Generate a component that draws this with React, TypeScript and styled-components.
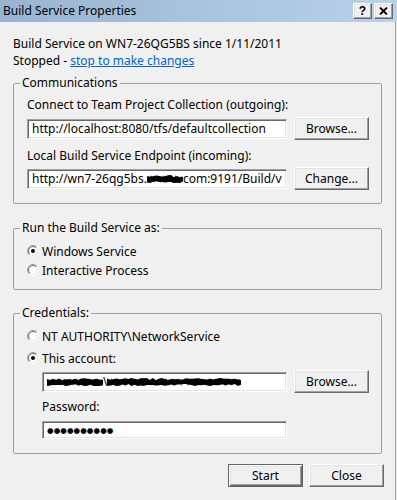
import React from 'react';
import styled, { createGlobalStyle } from 'styled-components';

const GlobalStyle = createGlobalStyle`
  html, body {
    margin: 0;
    padding: 0;
    background: #f0f0f0;
  }
  body {
    font-family: "Noto Sans", "Open Sans", sans-serif;
    font-size: 12px;
    color: #000;
  }
`;

const Window = styled.div`
  width: 397px;
  height: 500px;
  display: flex;
  flex-direction: column;
  background: #f0f0f0;
  overflow: hidden;
`;

const TitleBar = styled.div`
  flex: none;
  height: 22px;
  display: flex;
  align-items: center;
  justify-content: space-between;
  padding: 0 4px 0 3px;
  background: linear-gradient(90deg, #99b4d1 0%, #b9d1ea 100%);
`;

const Caption = styled.span`
  line-height: 16px;
`;

const CaptionButtons = styled.div`
  display: flex;
  gap: 2px;
`;

const CaptionButton = styled.div`
  width: 19px;
  height: 16px;
  box-sizing: border-box;
  display: flex;
  align-items: center;
  justify-content: center;
  background: #f0f0f0;
  border: 1px solid;
  border-color: #fff #696969 #696969 #fff;
  box-shadow: inset -1px -1px #a0a0a0, inset 1px 1px #e3e3e3;
  font-family: "Liberation Sans", sans-serif;
  font-weight: bold;
  font-size: 12px;
  line-height: 12px;
`;

const Body = styled.div`
  flex: 1;
  width: 396px;
  box-sizing: border-box;
  padding: 13px 13px 0 13px;
  border-right: 1px solid #a0a0a0;
`;

const InfoLine = styled.div`
  line-height: 17px;
  white-space: nowrap;
`;

const Link = styled.a`
  color: #0066cc;
  text-decoration: underline;
  cursor: pointer;
`;

const Group = styled.fieldset<{ $top: number; $bottom: number }>`
  margin: ${p => p.$top}px 0 0 0;
  padding: 6px 11px ${p => p.$bottom}px 13px;
  border: 1px solid #a0a0a0;
  border-radius: 2px;
  min-width: 0;
`;

const Legend = styled.legend`
  padding: 0 2px;
  margin-left: -7px;
  line-height: 16px;
`;

const FieldLabel = styled.div<{ $mt?: number; $indent?: number }>`
  margin-top: ${p => p.$mt ?? 0}px;
  margin-left: ${p => p.$indent ?? 0}px;
  line-height: 16px;
  white-space: nowrap;
`;

const InputRow = styled.div<{ $mt?: number; $indent?: number }>`
  display: flex;
  align-items: center;
  height: 23px;
  margin-top: ${p => p.$mt ?? 0}px;
  margin-left: ${p => p.$indent ?? 0}px;
`;

const TextBox = styled.div<{ $w: number; $h?: number; $mt?: number; $indent?: number }>`
  width: ${p => p.$w}px;
  height: ${p => p.$h ?? 20}px;
  margin-top: ${p => p.$mt ?? 0}px;
  margin-left: ${p => p.$indent ?? 0}px;
  box-sizing: border-box;
  display: flex;
  align-items: center;
  padding-left: 4px;
  background: #fff;
  border: 1px solid;
  border-color: #a0a0a0 #fff #fff #a0a0a0;
  box-shadow: inset 1px 1px #696969, inset -1px -1px #e3e3e3;
  white-space: nowrap;
  overflow: hidden;
`;

const Button = styled.button<{ $default?: boolean }>`
  width: 75px;
  height: 23px;
  margin-left: 7px;
  padding: 0;
  box-sizing: border-box;
  background: #f0f0f0;
  font: inherit;
  color: #000;
  border: 1px solid;
  border-color: ${p => (p.$default ? '#646464' : '#fff #696969 #696969 #fff')};
  box-shadow: ${p =>
    p.$default
      ? 'inset 1px 1px #fff, inset -1px -1px #696969, inset 2px 2px #e3e3e3, inset -2px -2px #a0a0a0'
      : 'inset -1px -1px #a0a0a0, inset 1px 1px #e3e3e3'};
`;

const RadioRow = styled.label<{ $mt?: number }>`
  display: flex;
  align-items: center;
  gap: 3px;
  height: 18px;
  margin-top: ${p => p.$mt ?? 0}px;
  white-space: nowrap;
`;

const Redacted = styled.span<{ $w: number }>`
  display: inline-flex;
  width: ${p => p.$w}px;
  height: 10px;
`;

const Dots = styled.span`
  font-family: "DejaVu Sans", sans-serif;
  font-size: 7.5px;
  letter-spacing: 0.1px;
`;

const ButtonRow = styled.div`
  display: flex;
  justify-content: flex-end;
  gap: 6px;
  margin: 10px -2px 0 0;

  & > button {
    margin-left: 0;
  }
`;

const Radio: React.FC<{ checked?: boolean; id: string }> = ({ checked, id }) => (
  <svg width="12" height="12" viewBox="0 0 12 12">
    <defs>
      <linearGradient id={`${id}o`} x1="0" y1="0" x2="1" y2="1">
        <stop offset="0.5" stopColor="#a0a0a0" />
        <stop offset="0.5" stopColor="#ffffff" />
      </linearGradient>
      <linearGradient id={`${id}i`} x1="0" y1="0" x2="1" y2="1">
        <stop offset="0.5" stopColor="#696969" />
        <stop offset="0.5" stopColor="#e3e3e3" />
      </linearGradient>
    </defs>
    <circle cx="6" cy="6" r="5.5" fill="none" stroke={`url(#${id}o)`} strokeWidth="1" />
    <circle cx="6" cy="6" r="4.5" fill="#fff" stroke={`url(#${id}i)`} strokeWidth="1" />
    {checked && <circle cx="6" cy="6" r="2" fill="#000" />}
  </svg>
);

// irregular black marker blob used to hide private parts of the fields
const Scribble: React.FC<{ w: number; seed?: number }> = ({ w, seed = 1 }) => {
  const n = Math.max(3, Math.floor(w / 3));
  const jitter = (i: number) => ((Math.sin((i + 1) * 12.9898 * seed) * 43758.5453) % 1 + 1) % 1;
  const top = Array.from({ length: n + 1 }, (_, i) => `L${((i * w) / n).toFixed(1)} ${(1 + jitter(i) * 2.2).toFixed(1)}`);
  const bottom = Array.from({ length: n + 1 }, (_, i) => {
    const k = n - i;
    return `L${((k * w) / n).toFixed(1)} ${(7 + jitter(k + 50) * 2.2).toFixed(1)}`;
  });
  return (
    <svg width={w} height="10" viewBox={`0 0 ${w} 10`}>
      <path d={`M0 5 ${top.join(' ')} ${bottom.join(' ')} Z`} fill="#000" />
      <path
        d={`M1 5 ${Array.from({ length: n }, (_, i) => `L${(((i + 0.5) * w) / n).toFixed(1)} ${i % 2 ? 2.5 : 7.5}`).join(' ')}`}
        fill="none"
        stroke="#000"
        strokeWidth="1.2"
        opacity="0.6"
      />
    </svg>
  );
};

export default function App() {
  return (
    <>
      <GlobalStyle />
      <Window>
        <TitleBar>
          <Caption>Build Service Properties</Caption>
          <CaptionButtons>
            <CaptionButton>?</CaptionButton>
            <CaptionButton>
              <svg width="9" height="8" viewBox="0 0 9 8">
                <path d="M1 0.5 L8 7.5 M8 0.5 L1 7.5" stroke="#000" strokeWidth="1.8" />
              </svg>
            </CaptionButton>
          </CaptionButtons>
        </TitleBar>
        <Body>
          <InfoLine>Build Service on WN7-26QG5BS since 1/11/2011</InfoLine>
          <InfoLine>
            Stopped - <Link>stop to make changes</Link>
          </InfoLine>

          <Group $top={6} $bottom={13}>
            <Legend>Communications</Legend>
            <FieldLabel>Connect to Team Project Collection (outgoing):</FieldLabel>
            <InputRow $mt={4}>
              <TextBox $w={260}>http://localhost:8080/tfs/defaultcollection</TextBox>
              <Button>Browse...</Button>
            </InputRow>
            <FieldLabel $mt={8}>Local Build Service Endpoint (incoming):</FieldLabel>
            <InputRow $mt={3}>
              <TextBox $w={260}>
                http://wn7-26qg5bs.
                <Redacted $w={36}>
                  <Scribble w={36} seed={3} />
                </Redacted>
                com:9191/Build/v
              </TextBox>
              <Button>Change...</Button>
            </InputRow>
          </Group>

          <Group $top={16} $bottom={10}>
            <Legend>Run the Build Service as:</Legend>
            <RadioRow>
              <Radio id="r1" checked />
              Windows Service
            </RadioRow>
            <RadioRow $mt={1}>
              <Radio id="r2" />
              Interactive Process
            </RadioRow>
          </Group>

          <Group $top={15} $bottom={14}>
            <Legend>Credentials:</Legend>
            <RadioRow>
              <Radio id="r3" />
              NT AUTHORITY\NetworkService
            </RadioRow>
            <RadioRow $mt={4}>
              <Radio id="r4" checked />
              This account:
            </RadioRow>
            <InputRow $mt={3} $indent={15}>
              <TextBox $w={245}>
                <Redacted $w={56}>
                  <Scribble w={56} seed={5} />
                </Redacted>
                \
                <Redacted $w={134}>
                  <Scribble w={134} seed={7} />
                </Redacted>
              </TextBox>
              <Button>Browse...</Button>
            </InputRow>
            <FieldLabel $mt={6} $indent={15}>Password:</FieldLabel>
            <TextBox $w={245} $h={18} $mt={6} $indent={15}>
              <Dots>●●●●●●●●●●</Dots>
            </TextBox>
          </Group>

          <ButtonRow>
            <Button $default>Start</Button>
            <Button>Close</Button>
          </ButtonRow>
        </Body>
      </Window>
    </>
  );
}
